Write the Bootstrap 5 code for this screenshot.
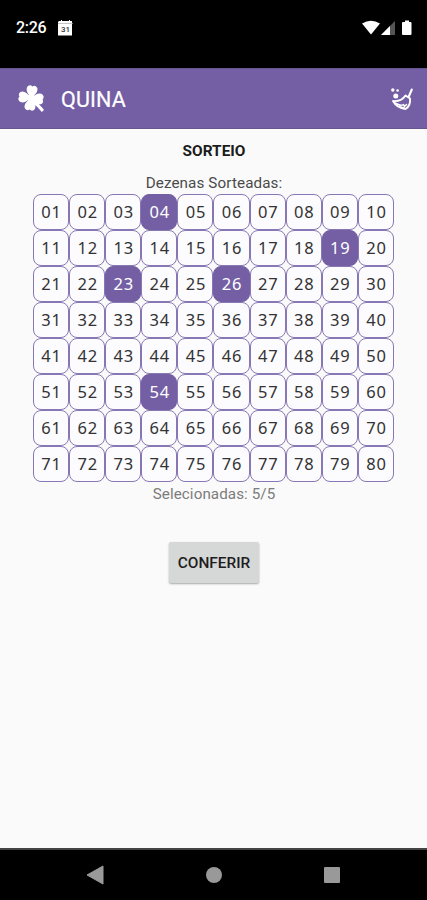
<!DOCTYPE html>
<html lang="pt-BR">
<head>
<meta charset="utf-8">
<meta name="viewport" content="width=device-width, initial-scale=1">
<title>Quina</title>
<link href="https://cdn.jsdelivr.net/npm/bootstrap@5.3.0/dist/css/bootstrap.min.css" rel="stylesheet">
<style>
:root { --brand: #745fa4; }
body { font-family: Roboto, sans-serif; background: #fafafa; color: #222; height: 900px; overflow: hidden; }
svg { display: block; flex: none; }
.status-bar { height: 68px; padding: 0 14px 13px 16px; font-size: 16px; font-weight: 500; }
.status-time { width: 42px; line-height: 20px; letter-spacing: -.3px; }
.app-bar { height: 61px; background: var(--brand); border-top: 1px solid #67558f; border-bottom: 1px solid #67558f; padding: 0 13px 0 17px; }
.app-title { font-size: 21.5px; line-height: 28px; font-weight: 400; letter-spacing: .15px; margin-left: 15px; padding-top: 3px; -webkit-text-stroke: .2px #fff; }
.heading { font-size: 15.4px; line-height: 20px; font-weight: 700; margin-top: 12px; padding-left: 1px; color: #1c1c1c; }
.caption { font-size: 15.2px; line-height: 20px; margin-top: 12px; padding-left: 1px; letter-spacing: .12px; color: #4a4a4a; }
.number-grid { display: grid; grid-template-columns: repeat(10, 1fr); grid-auto-rows: 36px; width: 361px; margin-top: 1px; }
.number { border: 1px solid #8778b5; border-radius: 8px; font-family: "Noto Sans", sans-serif; font-size: 16.5px; letter-spacing: .8px; color: #333; background: #fcfbfe; padding: 1px 0 0 1px; line-height: 1; }
.number.picked { background: var(--brand); border-color: var(--brand); color: #fff; }
.selected-count { font-size: 15.2px; line-height: 20px; margin-top: 2px; padding-left: 1px; letter-spacing: .08px; color: #7c7c7c; }
.check-btn { width: 90px; height: 41px; margin-top: 38px; padding: 2px 0 0 1px; border: 0; border-radius: 2px; background: #d6d7d7; color: #1d1d1d; font-size: 15.4px; font-weight: 500; box-shadow: 0 1px 2px #0005; }
.check-btn:hover { background: #cbcccc; }
.system-nav { height: 52px; border-top: 2px solid #444; padding: 0 86px; }
</style>
</head>
<body class="d-flex flex-column">
<div class="status-bar bg-black text-white d-flex align-items-center">
  <span class="status-time">2:26</span>
  <svg width="15" height="16" viewBox="0 0 15 16"><path d="M1 1h2V0h1v1h7V0h1v1h2v14.500H0V2z" fill="#fff"/><path d="M0 3.500h15" stroke="#aaa" stroke-width=".7"/><text x="7.500" y="12" text-anchor="middle" font-family="Roboto, sans-serif" font-size="8" font-weight="500" fill="#333">31</text></svg>
  <div class="d-flex ms-auto align-items-center">
    <svg width="51" height="16" viewBox="0 0 51 16"><path d="M0 3.500Q9 -2 18 3.500L9 14.500z" fill="#fff"/><path d="M19 15L33 1v14z" fill="#555"/><path d="M19 15l9-9v9z" fill="#fff"/><path d="M41 2h2V.5h4V2h1.500q1 0 1 1v11q0 1-1 1H41q-1 0-1-1V3q0-1 1-1z" fill="#fff"/></svg>
  </div>
</div>
<header class="app-bar text-white d-flex align-items-center">
  <svg width="29" height="28" viewBox="0 0 29 28" fill="#fff"><g transform="rotate(7 14 13)"><path id="leaf" d="M14 13L10 8.500Q7.500 4.500 9.300 1.800Q11.500 -.5 14 1.300Q16.500 -.5 18.700 1.800Q20.500 4.500 18 8.500z"/><use href="#leaf" transform="rotate(90 14 13)"/><use href="#leaf" transform="rotate(180 14 13)"/><use href="#leaf" transform="rotate(270 14 13)"/><circle cx="14" cy="13" r="4"/></g><path d="M14 14Q22 18 27 25L24.800 27Q20 21 14 17z"/></svg>
  <h1 class="app-title mb-0">QUINA</h1>
  <svg class="ms-auto" width="24" height="24" viewBox="0 0 24 24" fill="none" stroke="#fff" stroke-linecap="round" stroke-linejoin="round"><path d="M21.800 2.500L18.800 9.500" stroke-width="2.100"/><path d="M15.500 8.500l4.500 3c.5 4.500-1 8.500-4.500 10.500C10.500 21.500 5.500 18.500 3 14 8 14.500 12.500 13 15.500 8.500z" stroke-width="1.900"/><path d="M5 16q6 3.500 8.500 1.500l1 2 2-2M9 19.500l5 1.500" stroke-width="1.500"/><g fill="#fff" stroke="none"><circle cx="2.800" cy="3" r="1.700"/><circle cx="7.600" cy="3.500" r="1.300"/><circle cx="5.800" cy="9" r="2.500"/></g></svg>
</header>
<main class="flex-grow-1 d-flex flex-column align-items-center">
  <h2 class="heading mb-0">SORTEIO</h2>
  <p class="caption mb-0">Dezenas Sorteadas:</p>
  <div class="number-grid" id="numbers"></div>
  <p class="selected-count mb-0">Selecionadas: 5/5</p>
  <button type="button" class="btn check-btn">CONFERIR</button>
</main>
<footer class="system-nav bg-black d-flex justify-content-between align-items-center">
  <svg width="18" height="20" viewBox="0 0 18 20"><path d="M1 10L17 1v18z" fill="#999" stroke="#999" stroke-linejoin="round"/></svg>
  <svg width="18" height="18" viewBox="0 0 18 18"><circle cx="9" cy="9" r="8" fill="#999"/></svg>
  <svg width="18" height="18" viewBox="0 0 18 18"><rect x="1" y="1" width="16" height="16" rx="1" fill="#999"/></svg>
</footer>
<script src="https://cdn.jsdelivr.net/npm/bootstrap@5.3.0/dist/js/bootstrap.bundle.min.js"></script>
<script>
const drawn = [4, 19, 23, 26, 54];
const grid = document.getElementById('numbers');
for (let n = 1; n <= 80; n++) {
  const cell = document.createElement('div');
  cell.className = 'number d-flex align-items-center justify-content-center' + (drawn.includes(n) ? ' picked' : '');
  cell.textContent = String(n).padStart(2, '0');
  grid.appendChild(cell);
}
</script>
</body>
</html>
